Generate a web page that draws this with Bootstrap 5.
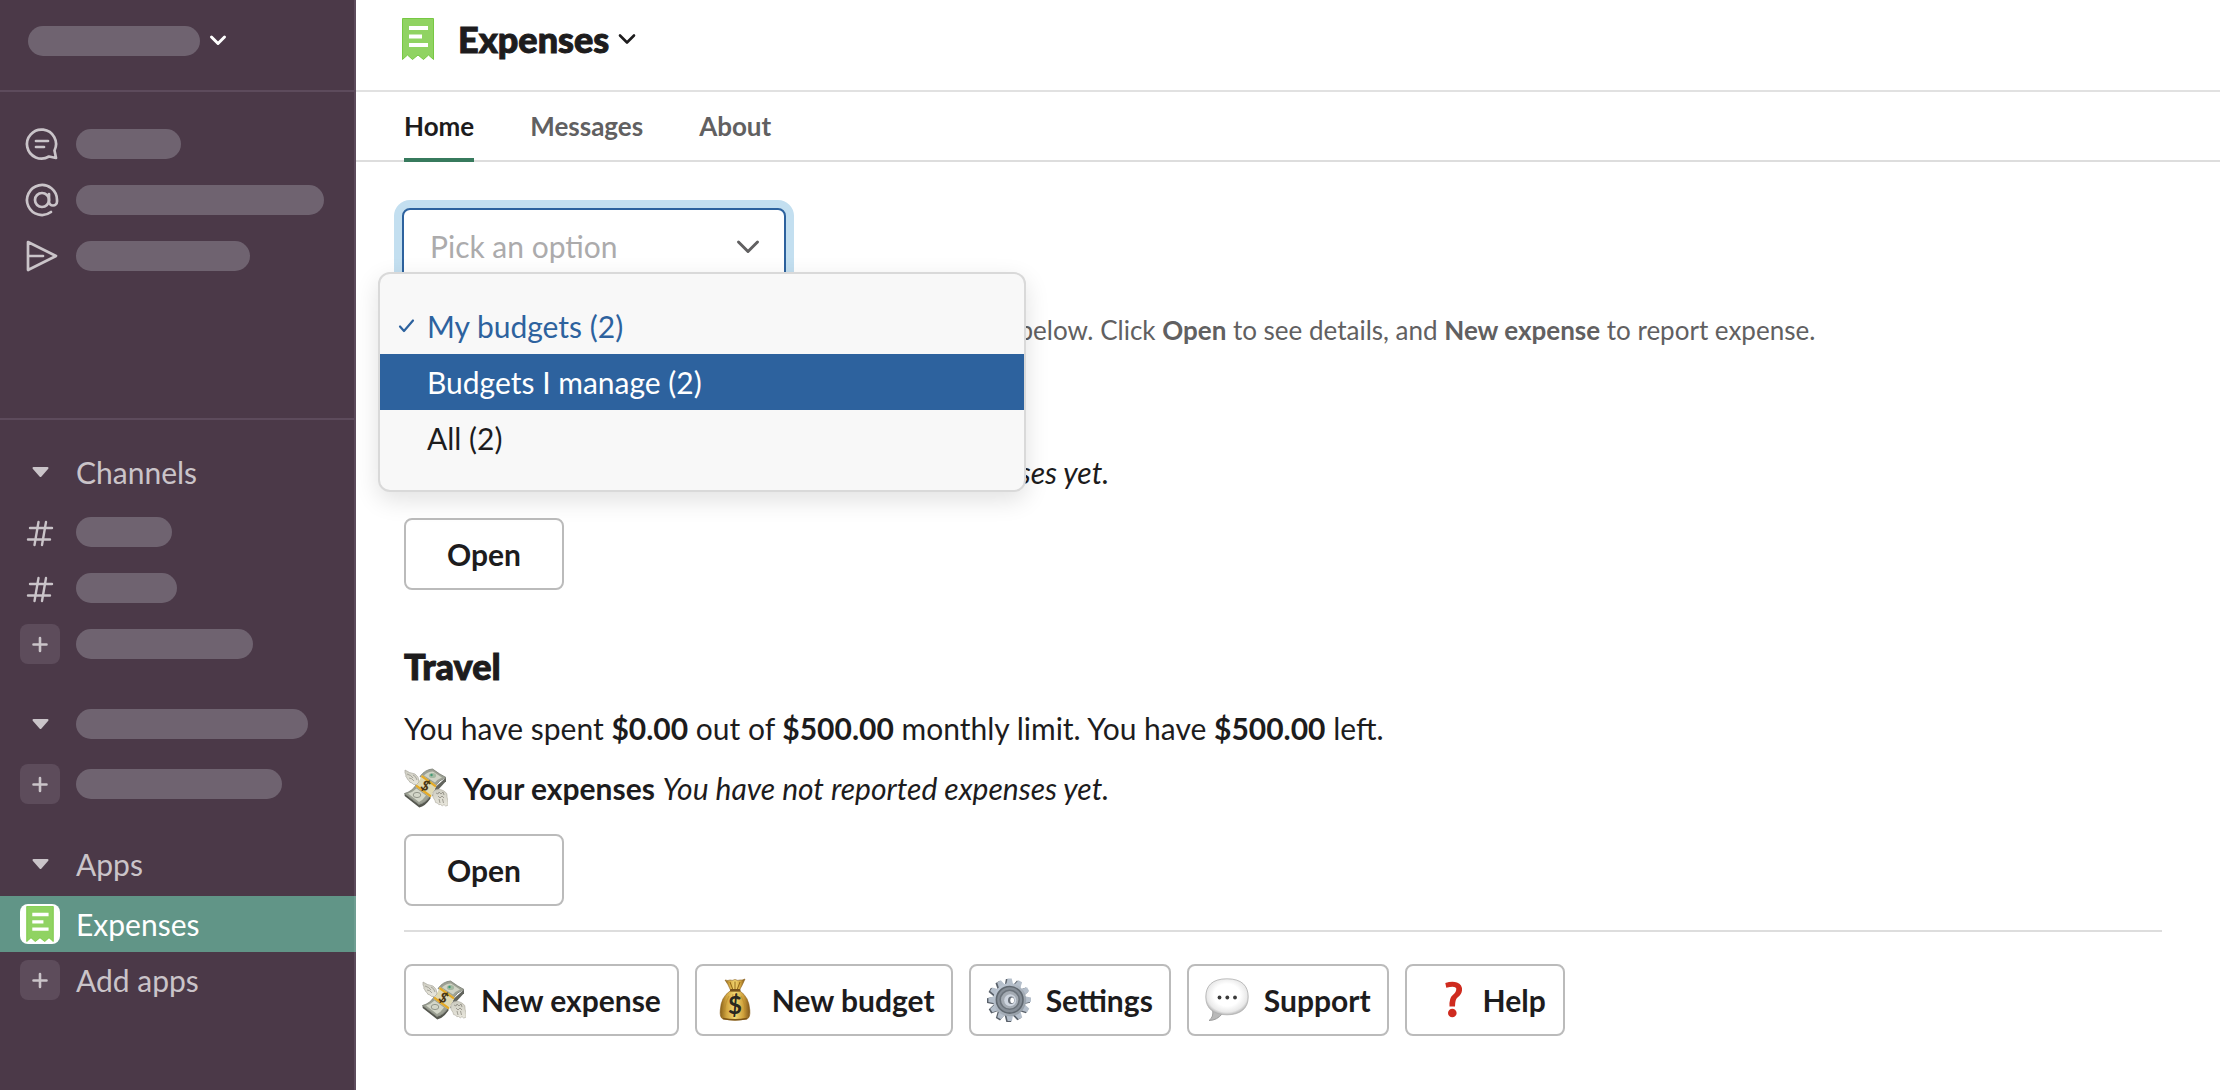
<!DOCTYPE html>
<html lang="en">
<head>
<meta charset="utf-8">
<meta name="viewport" content="width=device-width, initial-scale=1">
<title>Expenses</title>
<link href="https://cdn.jsdelivr.net/npm/bootstrap@5.3.0/dist/css/bootstrap.min.css" rel="stylesheet">
<style>
  body { font-family: Lato, "Liberation Sans", sans-serif; font-size: 30px; line-height: 44px; color: #1d1c1d; background: #fff; }
  b, strong { font-weight: 700; }
  .side { width: 356px; background: #4b3948; color: #cac4c9; border-right: 2px solid #5d4b5c; }
  .side-head { height: 92px; padding: 26px 28px 0; border-bottom: 2px solid #5d4b5c; }
  .side-quick { height: 328px; padding-top: 24px; border-bottom: 2px solid #5d4b5c; }
  .side-row { height: 56px; padding-left: 20px; gap: 16px; color: #cac4c9; text-decoration: none; }
  .side-row svg { width: 40px; height: 40px; flex: none; }
  .side-group { margin-top: 24px; }
  .side-title { margin-bottom: 4px; }
  .side-active { background: #619587; color: #fff; margin-right: -2px; border-right: 2px solid #6f9e92; }
  .blank { height: 30px; border-radius: 15px; background: #6f6370; }
  .w-ws { width: 172px; }
  .w-a { width: 105px; } .w-b { width: 248px; } .w-c { width: 174px; }
  .w-d { width: 96px; } .w-e { width: 101px; } .w-f { width: 177px; }
  .w-g { width: 232px; } .w-h { width: 206px; }
  .ln { fill: none; stroke: currentColor; stroke-linecap: round; stroke-linejoin: round; }
  .plain-btn { background: none; border: 0; padding: 0; color: inherit; }
  .app-head { height: 92px; padding: 15px 38px 0; border-bottom: 2px solid #e1e1e1; }
  .app-head h1 { font-size: 36px; line-height: 48px; font-weight: 900; margin: 0; -webkit-text-stroke: 1px #1d1c1d; }
  .app-tabs { height: 70px; padding: 0 48px; gap: 56px; border-bottom: 2px solid #ddd; }
  .app-tabs .nav-link { height: 70px; padding: 0; font-size: 26px; line-height: 68px; font-weight: 700; color: #616061; border-bottom: 4px solid transparent; }
  .app-tabs .nav-link.active { color: #1d1c1d; border-color: #377a5d; }
  .app-body { padding: 46px 58px 54px 48px; }
  .pick { width: 384px; margin-left: -2px; }
  .pick .form-select { height: 76px; padding: 0 60px 0 26px; font-size: 30px; line-height: 44px; color: #acabac; border: 2px solid #2d629e; border-radius: 8px; background-image: none; box-shadow: 0 0 0 8px #c3dff0; }
  .pick-arrow { right: 25px; top: 30px; width: 26px; height: 18px; color: #616061; pointer-events: none; }
  .pick-menu { left: -24px; top: 64px; width: 648px; padding: 24px 0; border: 2px solid #d9d9d9; border-radius: 12px; background: #f8f8f8; box-shadow: 0 8px 24px rgba(0,0,0,.12); z-index: 5; }
  .pick-item { display: flex; align-items: center; gap: 12px; width: 100%; height: 56px; padding: 0 18px; border: 0; background: none; text-align: left; color: #1d1c1d; }
  .pick-item svg { width: 17px; height: 16px; flex: none; }
  .pick-item.chosen { color: #2d629e; }
  .pick-item.hover { background: #2d629e; color: #fff; }
  .hint { font-size: 26px; color: #616061; margin: 24px 0 36px; }
  .budget { margin-bottom: 54px; }
  .budget h2 { font-size: 36px; line-height: 44px; font-weight: 900; margin: 0 0 18px; -webkit-text-stroke: 1px #1d1c1d; }
  .budget p { margin: 0 0 16px; }
  .budget .spent { display: flex; align-items: center; gap: 15px; margin-bottom: 24px; }
  .emo { width: 44px; height: 44px; flex: none; display: block; }
  .out-btn { min-width: 160px; height: 72px; padding: 0 16px; border: 2px solid #bbb; border-radius: 8px; font-size: 30px; line-height: 44px; font-weight: 700; color: #1d1c1d; background: #fff; display: inline-flex; align-items: center; justify-content: center; gap: 15px; }
  .budget:last-of-type { margin-bottom: 24px; }
  .rule { border: 0; height: 2px; background: #ddd; opacity: 1; margin: 0 0 32px; }
</style>
<script src="https://cdn.jsdelivr.net/npm/bootstrap@5.3.0/dist/js/bootstrap.bundle.min.js"></script>
</head>
<body>
<svg width="0" height="0" class="position-absolute" aria-hidden="true">
  <defs>
    <linearGradient id="gold" x1="0" x2="1"><stop offset="0" stop-color="#8a6119"/><stop offset=".22" stop-color="#d2a640"/><stop offset=".5" stop-color="#f3d873"/><stop offset=".78" stop-color="#cfa03a"/><stop offset="1" stop-color="#80561a"/></linearGradient>
    <linearGradient id="steel" x1="0" y1="0" x2="1" y2="1"><stop offset="0" stop-color="#c4cedb"/><stop offset="1" stop-color="#8f979f"/></linearGradient>
    <radialGradient id="puff" cx=".5" cy=".45" r=".56"><stop offset=".55" stop-color="#fff"/><stop offset=".85" stop-color="#e9e9e9"/><stop offset="1" stop-color="#b4b4b4"/></radialGradient>
    <linearGradient id="wing" x1="0" y1="0" x2="0" y2="1"><stop offset="0" stop-color="#cccbc0"/><stop offset="1" stop-color="#eae8de"/></linearGradient>
    <symbol id="caret" viewBox="0 0 40 40"><path d="M13.500 16h14L20.500 24z" fill="currentColor" stroke="currentColor" stroke-width="2" stroke-linejoin="round"/></symbol>
    <symbol id="hash" viewBox="0 0 40 40"><path class="ln" stroke-width="2.400" d="M18.500 9L14.500 32M26 9L22 32M10 15H32M8 26.500H30"/></symbol>
    <symbol id="plus" viewBox="0 0 40 40"><rect width="40" height="40" rx="8" fill="#5d4c5b"/><path class="ln" stroke-width="2.600" d="M20 14v13M13.500 20.500h13"/></symbol>
    <symbol id="receipt" viewBox="0 0 32 42"><path d="M.5.500h31V41.500L26.500 37l-5 4.500L16 37l-5.500 4.500L5.500 37l-5 4.500z" fill="#90d362" stroke="#77c843"/><path d="M7 8h19v4H7zM7 16.500h13v4H7zM7 25h19v4H7z" fill="#fff"/></symbol>
    <symbol id="money" viewBox="0 0 44 44">
      <path d="M32 20.500L42 11.500v3.700L27.500 31z" fill="#62645d"/>
      <path d="M16 10.500Q21 3.500 28.500 3Q36 8.500 42 11.500Q35 14 31.500 20z" fill="#9da194" stroke="#787c72" stroke-width=".8"/>
      <path d="M20 9.500Q24 5.500 29 5.500Q34 9 38 11.500Q33 13.500 31 16.500z" fill="#d0d3c5"/>
      <ellipse cx="28.500" cy="9.500" rx="3.600" ry="2.600" fill="#a5b9a2"/><circle cx="27.500" cy="9" r="1.200" fill="#3f9a74"/>
      <path d="M.5 27.500L15 38.500Q21 37.500 26.500 29.500V32.500Q21 40.500 15.300 41.500L.7 30z" fill="#55574f"/>
      <path d="M.5 27.500Q8 25.500 12 19L26.500 29.500Q20.500 37.500 15 38.500z" fill="#9da194" stroke="#787c72" stroke-width=".8"/>
      <path d="M4 27.500Q9 26 12.500 22.500L22 29.500Q18.500 34.500 15 36z" fill="#d3d6c8"/>
      <ellipse cx="13" cy="29" rx="3.800" ry="2.600" fill="none" stroke="#8c9085" stroke-width=".9"/>
      <path d="M18 9L32.500 19.500L26.500 31.500L11.500 20.500Q15.500 15 18 9z" fill="#dfd9b4"/>
      <path d="M18 9L32.500 19.500L31.500 21.500L17 11zM12.500 18.500L27.500 29.500L26.500 31.500L11.500 20.500z" fill="#e5aa26"/>
      <text x="21.500" y="25" transform="rotate(32 22 20)" text-anchor="middle" font-family="Lato, sans-serif" font-size="14" font-weight="900" fill="#4b3714">$</text>
      <path d="M15 16Q15 10.500 11 8Q5 7 1 4Q.5 7 2 9Q1 10 3 12Q3 13.500 5 14.500Q5 16.500 8 17Q9 19 12.500 18.500z" fill="url(#wing)" stroke="#a9a89d" stroke-width=".7"/>
      <path d="M3 8q4 1 6 4M5 12q3 0 5 3M9 9q3 1 4 5" fill="none" stroke="#96958b" stroke-width=".8"/>
      <path d="M29 26Q33 21 40 25Q44 27 43 31Q45 38 43.500 39.500Q41.500 41 40 38.500Q38.500 41 36.500 38.500Q34.500 39.500 33.500 37Q31 37.500 31 34.500Q28 32 29 26z" fill="url(#wing)" stroke="#b4b2a6" stroke-width=".7"/>
      <path d="M32 27l2 1 1-2 2 2 2-2 1 3M34 30l2 2 2-2 2 2M35 33l1 4M38.500 33l1 4" fill="none" stroke="#8e8c82" stroke-width=".8"/>
    </symbol>
    <symbol id="bag" viewBox="0 0 44 44">
      <path d="M12 2q3 1 5 0q2 1 5-.5q3 1.500 5 .5q2 .5 5-1q-2.500 6-5.500 11h-9Q15 6 12 2z" fill="url(#gold)" stroke="#8b6019" stroke-width=".6"/>
      <path d="M17 4l3 8M22 3.500v8M27 4l-3 8" stroke="#916716" stroke-width="1" fill="none"/>
      <path d="M17 13Q8 19 7.300 32Q6.500 39.500 10 41Q22 43.500 34 41Q37.500 39.500 36.800 32Q36 19 27 13z" fill="url(#gold)" stroke="#8b6019" stroke-width=".6"/>
      <path d="M16 18q-4 7-4.500 16M28 18q4 7 4.500 16M20 16l-1 6M24 16l1 6" stroke="#b58a2e" stroke-width="1.200" fill="none" opacity=".6"/>
      <path d="M10 40.500q12 2.500 24 0" stroke="#7c5417" stroke-width="1.600" fill="none"/>
      <rect x="17" y="11" width="10.500" height="2.600" rx="1.200" fill="#76511a"/>
      <text x="22" y="36" text-anchor="middle" font-family="Lato, sans-serif" font-size="24" font-weight="700" fill="#2a271f">$</text>
    </symbol>
    <symbol id="gear" viewBox="0 0 44 44">
      <g transform="translate(21.500 22.500)"><g fill="#596069">
        <path id="tt" d="M-3.800-15L-2.600-21.500H2.200L3.800-15V15L2.600 21.500H-2.200L-3.800 15z"/><use href="#tt" transform="rotate(30)"/><use href="#tt" transform="rotate(60)"/><use href="#tt" transform="rotate(90)"/><use href="#tt" transform="rotate(120)"/><use href="#tt" transform="rotate(150)"/></g></g>
      <g transform="translate(22.700 21.800)"><g fill="#b5bfcb">
        <path id="tu" d="M-3.500-15L-2.200-21.300H2L3.500-15V15L2.200 21.300H-2L-3.500 15z"/><use href="#tu" transform="rotate(30)"/><use href="#tu" transform="rotate(60)"/><use href="#tu" transform="rotate(90)"/><use href="#tu" transform="rotate(120)"/><use href="#tu" transform="rotate(150)"/></g>
        <circle r="16.500" fill="url(#steel)"/><circle r="13.300" fill="#858d96" stroke="#606870" stroke-width="1.600"/><circle r="9.500" fill="#a4abb3" stroke="#6b737b" stroke-width="1.600"/>
        <circle cx=".5" cy=".5" r="6" fill="#ced5df"/><ellipse cx="1.500" cy=".5" rx="3.200" ry="3.800" fill="#697079"/><ellipse cx="2.500" cy=".5" rx="1.900" ry="2.900" fill="#fff"/></g>
    </symbol>
    <symbol id="bubble" viewBox="0 0 44 44">
      <path d="M7.500 31.500Q9 39 4 42.500Q12 42.500 17.500 35.500z" fill="#b9b9b9" stroke="#909090" stroke-width=".8"/>
      <path d="M22 .8C37 .8 43.200 8 43.200 19S36 36.800 22 36.800S.8 30 .8 19S7 .8 22 .8z" fill="url(#puff)" stroke="#b0b0b0" stroke-width=".8"/>
      <circle cx="14.500" cy="19.500" r="1.900" fill="#3a3a3a"/><circle cx="22.300" cy="19.500" r="1.900" fill="#3a3a3a"/><circle cx="30" cy="19.500" r="1.900" fill="#3a3a3a"/>
    </symbol>
    <symbol id="query" viewBox="0 0 44 44">
      <path d="M21.300 5Q28 3 33 4.500Q38.500 6.500 38 12.500Q37.500 16.500 33.500 19.500Q31 21.500 31 28.500H25.500Q25 20 28.800 17Q32.500 14 32.300 10.500Q31.500 7.500 22.300 9.800z" fill="#cf2b1f"/><circle cx="28.300" cy="35" r="4.300" fill="#cf2b1f"/>
    </symbol>
  </defs>
</svg>

<div class="d-flex min-vh-100">
  <aside class="side flex-shrink-0">
    <div class="side-head">
      <button type="button" class="plain-btn d-flex align-items-center text-white" aria-label="Workspace menu">
        <span class="blank w-ws"></span>
        <svg class="ms-2" width="20" height="16" viewBox="0 0 20 16"><path class="ln" stroke-width="3" d="M3.500 4L10 10.500L16.500 4"/></svg>
      </button>
    </div>
    <nav class="side-quick" aria-label="Shortcuts">
      <a href="#" class="side-row d-flex align-items-center" aria-label="Threads"><svg viewBox="0 0 40 40"><path class="ln" stroke-width="2.700" d="M34.500 26.500A14.500 14.500 0 1 0 29 32.500L36 34zM34.500 26.500L36 34M16 17H28M16 23H24"/></svg><span class="blank w-a"></span></a>
      <a href="#" class="side-row d-flex align-items-center" aria-label="Mentions"><svg viewBox="0 0 40 40"><path class="ln" stroke-width="2.700" d="M31 32A15 15 0 1 1 37 20V21.500A4 4 0 0 1 29 21.500V14"/><circle class="ln" stroke-width="2.700" cx="22" cy="20" r="7"/></svg><span class="blank w-b"></span></a>
      <a href="#" class="side-row d-flex align-items-center" aria-label="Drafts"><svg viewBox="0 0 40 40"><path class="ln" stroke-width="2.700" d="M8 6L36 20L8 34zM8 20H23"/></svg><span class="blank w-c"></span></a>
    </nav>
    <div class="side-group">
      <a href="#" class="side-row side-title d-flex align-items-center"><svg><use href="#caret"/></svg>Channels</a>
      <a href="#" class="side-row d-flex align-items-center" aria-label="Channel"><svg viewBox="0 -1 40 40"><use href="#hash" width="40" height="40"/></svg><span class="blank w-d"></span></a>
      <a href="#" class="side-row d-flex align-items-center" aria-label="Channel"><svg viewBox="0 -1 40 40"><use href="#hash" width="40" height="40"/></svg><span class="blank w-e"></span></a>
      <a href="#" class="side-row d-flex align-items-center" aria-label="Add channels"><svg><use href="#plus"/></svg><span class="blank w-f"></span></a>
    </div>
    <div class="side-group">
      <a href="#" class="side-row side-title d-flex align-items-center" aria-label="Direct messages"><svg><use href="#caret"/></svg><span class="blank w-g"></span></a>
      <a href="#" class="side-row d-flex align-items-center" aria-label="Add people"><svg><use href="#plus"/></svg><span class="blank w-h"></span></a>
    </div>
    <div class="side-group">
      <a href="#" class="side-row side-title d-flex align-items-center"><svg><use href="#caret"/></svg>Apps</a>
      <a href="#" class="side-row side-active d-flex align-items-center"><svg viewBox="0 0 40 40"><rect width="40" height="40" rx="8" fill="#fff"/><use href="#receipt" x="6" y="2" width="28" height="36"/></svg>Expenses</a>
      <a href="#" class="side-row d-flex align-items-center"><svg><use href="#plus"/></svg>Add apps</a>
    </div>
  </aside>

  <main class="flex-grow-1">
    <header class="app-head d-flex align-items-start">
      <svg width="48" height="48" viewBox="0 0 48 48" class="flex-shrink-0"><use href="#receipt" x="8" y="3" width="32" height="42"/></svg>
      <button type="button" class="plain-btn d-flex align-items-center ms-3">
        <h1>Expenses</h1>
        <svg class="ms-2" width="20" height="16" viewBox="0 0 20 16"><path class="ln" stroke-width="2.600" d="M3 4.500L10 11.500L17 4.500"/></svg>
      </button>
    </header>
    <nav class="app-tabs nav flex-nowrap">
      <a class="nav-link active" href="#">Home</a>
      <a class="nav-link" href="#">Messages</a>
      <a class="nav-link" href="#">About</a>
    </nav>
    <div class="app-body">
      <div class="pick position-relative">
        <select class="form-select" aria-label="Budgets to show"><option>Pick an option</option></select>
        <svg class="pick-arrow position-absolute" viewBox="0 0 26 18"><path class="ln" stroke-width="3" d="M3.500 4L13 13.500L22.500 4"/></svg>
        <div class="pick-menu position-absolute" role="listbox" aria-label="Budgets">
          <button type="button" class="pick-item chosen" role="option" aria-selected="true"><svg viewBox="0 0 17 16"><path class="ln" stroke-width="2.200" d="M2 8.500L6 13L15 2.500"/></svg>My budgets (2)</button>
          <button type="button" class="pick-item hover" role="option" aria-selected="false"><svg></svg>Budgets I manage (2)</button>
          <button type="button" class="pick-item" role="option" aria-selected="false"><svg></svg>All (2)</button>
        </div>
      </div>
      <p class="hint">You can sort and review all the budgets that are listed below. Click <b>Open</b> to see details, and <b>New expense</b> to report expense.</p>
      <section class="budget">
        <h2>Office</h2>
        <p class="spent"><svg class="emo"><use href="#money"/></svg><span><b>Your expenses</b> <em>You have not reported expenses yet.</em></span></p>
        <button type="button" class="out-btn">Open</button>
      </section>
      <section class="budget">
        <h2>Travel</h2>
        <p>You have spent <b>$0.00</b> out of <b>$500.00</b> monthly limit. You have <b>$500.00</b> left.</p>
        <p class="spent"><svg class="emo"><use href="#money"/></svg><span><b>Your expenses</b> <em>You have not reported expenses yet.</em></span></p>
        <button type="button" class="out-btn">Open</button>
      </section>
      <hr class="rule">
      <div class="d-flex flex-wrap gap-3">
        <button type="button" class="out-btn"><svg class="emo"><use href="#money"/></svg>New expense</button>
        <button type="button" class="out-btn"><svg class="emo"><use href="#bag"/></svg>New budget</button>
        <button type="button" class="out-btn"><svg class="emo"><use href="#gear"/></svg>Settings</button>
        <button type="button" class="out-btn"><svg class="emo"><use href="#bubble"/></svg>Support</button>
        <button type="button" class="out-btn"><svg class="emo"><use href="#query"/></svg>Help</button>
      </div>
    </div>
  </main>
</div>
</body>
</html>
